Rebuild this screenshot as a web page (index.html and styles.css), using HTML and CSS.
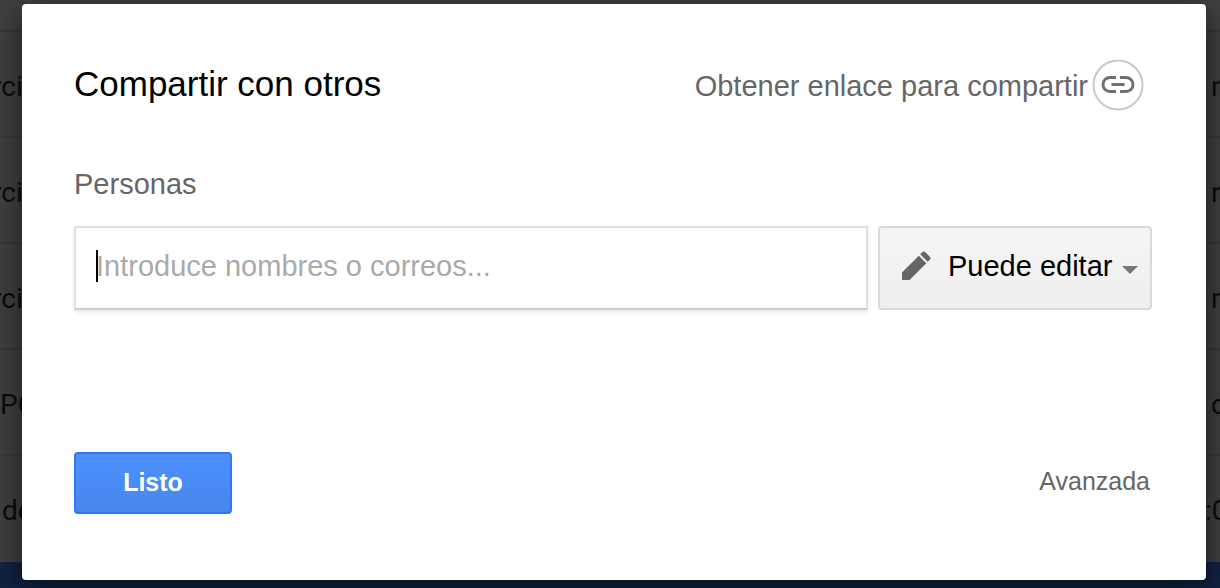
FILE: index.html
```
<!DOCTYPE html>
<html lang="es">
<head>
<meta charset="utf-8">
<meta name="viewport" content="width=device-width, initial-scale=1">
<title>Compartir con otros</title>
<link rel="stylesheet" href="styles.css">
</head>
<body>
<div class="page" aria-hidden="true">
  <div class="row"><span class="cell cell-cut">rci</span><span class="cell cell-end">n</span></div>
  <div class="row"><span class="cell cell-cut">rci</span><span class="cell cell-end">n</span></div>
  <div class="row"><span class="cell cell-cut">rci</span><span class="cell cell-end">n</span></div>
  <div class="row"><span class="cell">PC</span><span class="cell cell-end">c</span></div>
  <div class="row"><span class="cell cell-inset">de</span><span class="cell cell-end cell-wide">:0</span></div>
  <div class="page-footer"></div>
</div>
<form class="dialog" role="dialog" aria-labelledby="title">
  <header class="dialog-header">
    <h1 class="title" id="title">Compartir con otros</h1>
    <a class="get-link" href="#enlace">Obtener enlace para compartir
      <svg class="link-icon" width="52" height="52" viewBox="0 0 52 52" aria-hidden="true">
        <circle cx="26" cy="25" r="24.500" fill="none" stroke="#c9c9c9" stroke-width="2"/>
        <path d="M24 17.500h-6a7 7 0 0 0 0 14h6M28 17.500h6a7 7 0 0 1 0 14h-6M19.500 24.500h13" fill="none" stroke="#707070" stroke-width="3"/>
      </svg>
    </a>
  </header>
  <label class="people-label" for="people">Personas</label>
  <div class="fields">
    <div class="people">
      <input class="people-input" id="people" type="text" placeholder="Introduce nombres o correos...">
      <span class="caret"></span>
    </div>
    <div class="access">
      <svg class="pencil" width="30" height="30" viewBox="0 0 30 30" aria-hidden="true">
        <path d="M1 21.500L17.800 4.700L25.300 12.200L8.500 29H1ZM19.200 3.300L21.500 1Q22.800 -.2 24.100 1L29 5.900Q30.200 7.200 29 8.500L26.700 10.800Z" fill="#666"/>
      </svg>
      <select class="access-select" aria-label="Permiso de acceso">
        <option>Puede editar</option>
      </select>
      <svg class="arrow" width="16" height="8" viewBox="0 0 16 8" aria-hidden="true"><path d="M0 0H16L8 8Z" fill="#777"/></svg>
    </div>
  </div>
  <footer class="dialog-footer">
    <button class="done" type="button">Listo</button>
    <a class="advanced" href="#avanzada">Avanzada</a>
  </footer>
</form>
</body>
</html>
```
FILE: styles.css
```
* {
  box-sizing: border-box;
}

body {
  margin: 0;
  min-height: 100vh;
  overflow: hidden;
  font-family: "Liberation Sans", Arial, sans-serif;
  background: #404040;
}

.page {
  display: flex;
  flex-direction: column;
  height: 100vh;
  padding-top: 30px;
  overflow: hidden;
  color: #0c0c0c;
  font: 28px/34px Roboto, sans-serif;
}

.row {
  display: flex;
  flex: 0 0 106px;
  align-items: center;
  justify-content: space-between;
  padding-top: 6px;
  border-top: 2px solid #393939;
  white-space: nowrap;
}

.cell-cut {
  margin-left: -8px;
}

.cell-inset {
  margin-left: 2px;
}

.cell-end {
  width: 9px;
}

.cell-wide {
  width: 15px;
}

.page-footer {
  flex: 1;
  margin-top: 2px;
  background: #122242;
}

.dialog {
  position: absolute;
  inset: 4px 14px 8px 22px;
  padding: 56px 54px 0 52px;
  border-radius: 4px;
  background: #fff;
  box-shadow: 0 8px 32px rgba(0, 0, 0, 0.6);
}

.dialog-header {
  display: flex;
  align-items: center;
  justify-content: space-between;
  padding-right: 8px;
}

.title {
  margin: 0;
  padding-bottom: 4px;
  color: #000;
  font-size: 35px;
  font-weight: 400;
  line-height: 40px;
}

.get-link {
  display: flex;
  align-items: center;
  gap: 4px;
  color: #666;
  font-size: 29px;
  line-height: 34px;
  text-decoration: none;
}

.people-label {
  display: block;
  margin-top: 55px;
  color: #666;
  font-size: 29px;
  line-height: 34px;
}

.fields {
  display: flex;
  gap: 10px;
  height: 84px;
  margin-top: 25px;
}

.people {
  position: relative;
  flex: 1;
}

.people-input {
  width: 100%;
  height: 100%;
  padding: 0 20px 4px;
  border: 2px solid #e0e0e0;
  border-bottom-color: #ccc;
  outline: 0;
  box-shadow: 0 2px 4px rgba(0, 0, 0, 0.1);
  background: #fff;
  color: #000;
  font: 29px "Liberation Sans", Arial, sans-serif;
}

.people-input::placeholder {
  color: #aaa;
  opacity: 1;
}

.caret {
  position: absolute;
  top: 24px;
  left: 22px;
  width: 2px;
  height: 32px;
  background: #000;
}

.access {
  position: relative;
  width: 274px;
}

.access-select {
  width: 100%;
  height: 100%;
  padding: 0 32px 4px 68px;
  border: 2px solid #dadada;
  border-radius: 4px;
  appearance: none;
  background: linear-gradient(#f5f5f5, #efefef);
  color: #000;
  font: 29px "Liberation Sans", Arial, sans-serif;
}

.pencil {
  position: absolute;
  top: 25px;
  left: 23px;
}

.arrow {
  position: absolute;
  top: 40px;
  right: 14px;
}

.dialog-footer {
  display: flex;
  align-items: center;
  justify-content: space-between;
  margin-top: 142px;
  padding-right: 2px;
}

.done {
  width: 158px;
  height: 62px;
  padding: 0 0 2px;
  border: 2px solid #3079ed;
  border-radius: 4px;
  background: linear-gradient(#4d90fe, #4787ed);
  color: #fff;
  font: bold 25px "Liberation Sans", Arial, sans-serif;
}

.advanced {
  padding-bottom: 4px;
  color: #666;
  font-size: 25px;
  line-height: 30px;
  text-decoration: none;
}
```
